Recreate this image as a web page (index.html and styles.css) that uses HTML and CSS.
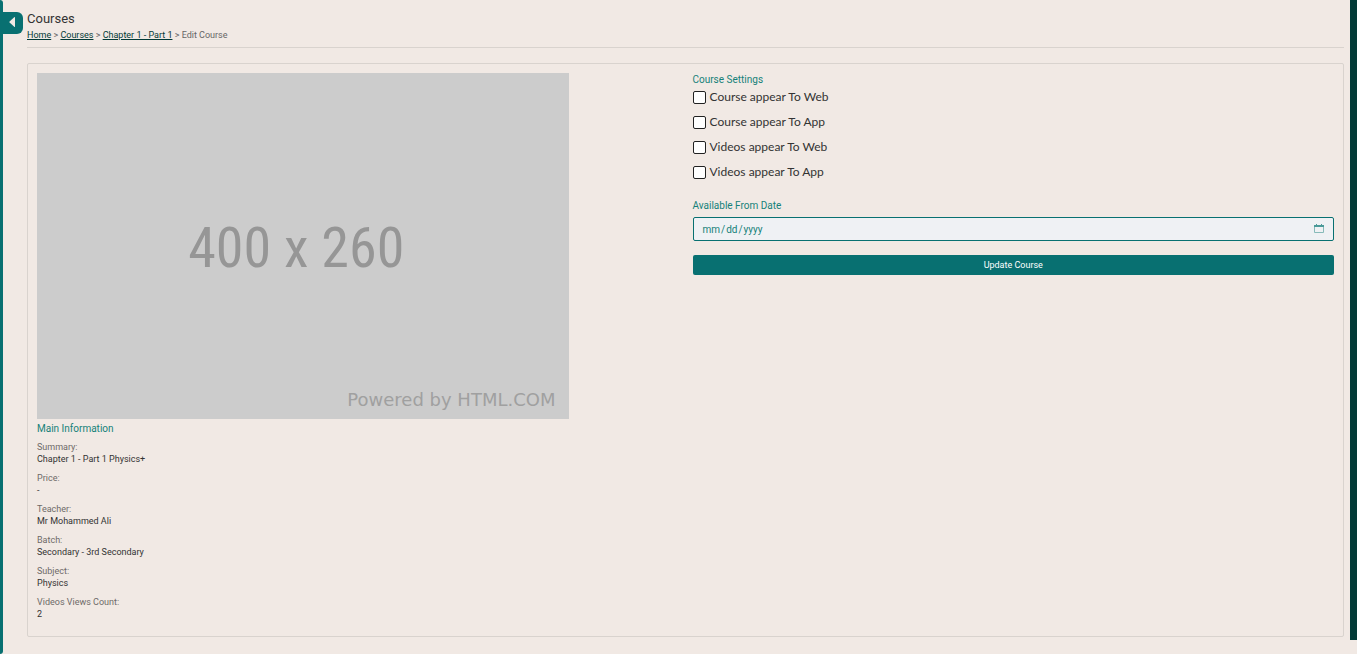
FILE: index.html
```html
<!DOCTYPE html>
<html lang="en">
<head>
<meta charset="utf-8">
<meta name="viewport" content="width=device-width, initial-scale=1">
<title>Edit Course</title>
<link rel="stylesheet" href="styles.css">
</head>
<body>
<div class="shell">
  <aside class="sidebar">
    <button class="sidebar-toggle" type="button" aria-label="Open menu">
      <svg viewBox="0 0 8 12" aria-hidden="true"><path d="M6.2 1.2 1.6 5.4q-.6.6 0 1.2l4.6 4.2q.8.5.8-.4V1.6q0-.9-.8-.4Z"/></svg>
    </button>
  </aside>
  <main class="page">
    <header class="page-header">
      <h1 class="title">Courses</h1>
      <nav class="breadcrumb" aria-label="Breadcrumb">
        <a href="#">Home</a> &gt; <a href="#">Courses</a> &gt; <a href="#">Chapter 1 - Part 1</a> &gt; <span>Edit Course</span>
      </nav>
    </header>
    <section class="panel">
      <div class="info">
        <div class="thumb">
          <span class="thumb-size">400 x 260</span>
          <span class="thumb-credit">Powered by HTML.COM</span>
        </div>
        <h2 class="caption">Main Information</h2>
        <dl class="facts">
          <div><dt>Summary:</dt><dd>Chapter 1 - Part 1 Physics+</dd></div>
          <div><dt>Price:</dt><dd>-</dd></div>
          <div><dt>Teacher:</dt><dd>Mr Mohammed Ali</dd></div>
          <div><dt>Batch:</dt><dd>Secondary - 3rd Secondary</dd></div>
          <div><dt>Subject:</dt><dd>Physics</dd></div>
          <div><dt>Videos Views Count:</dt><dd>2</dd></div>
        </dl>
      </div>
      <form class="settings">
        <fieldset class="options">
          <legend class="caption">Course Settings</legend>
          <label class="option"><input type="checkbox">Course appear To Web</label>
          <label class="option"><input type="checkbox">Course appear To App</label>
          <label class="option"><input type="checkbox">Videos appear To Web</label>
          <label class="option"><input type="checkbox">Videos appear To App</label>
        </fieldset>
        <label class="caption date-label" for="from">Available From Date</label>
        <div class="date-field">
          <input id="from" type="date">
          <svg class="calendar" viewBox="0 0 10 10" aria-hidden="true"><path class="frame" d="M.5 2.5h9v6h-9z"/><path class="bar" d="M0 1h2V0h1v1h4V0h1v1h2v2H0z"/></svg>
        </div>
        <button class="submit" type="button">Update Course</button>
      </form>
    </section>
  </main>
  <div class="rail"></div>
</div>
</body>
</html>
```
FILE: styles.css
```css
* {
  box-sizing: border-box;
}

body {
  margin: 0;
  background: #f1e9e4;
  color: #333;
  font: 9px/12px Roboto, "Open Sans", sans-serif;
}

.shell {
  display: flex;
  min-height: 100vh;
}

.sidebar {
  position: relative;
  flex: none;
  width: 3px;
  background: #087071;
  border-radius: 0 3px 3px 0;
}

.sidebar-toggle {
  position: absolute;
  top: 12px;
  left: 0;
  width: 23px;
  height: 22px;
  padding: 0 0 2px;
  border: 0;
  border-radius: 0 6px 6px 0;
  background: #087071;
  display: flex;
  align-items: center;
  justify-content: center;
}

.sidebar-toggle svg {
  width: 8px;
  height: 12px;
  fill: #f1e9e4;
}

.page {
  flex: 1;
  padding: 10px 6px 16px 24px;
}

.page-header {
  padding-bottom: 6px;
  border-bottom: 1px solid #d9d3ce;
  margin-bottom: 15px;
}

.title {
  margin: 0 0 1px;
  font-size: 13px;
  line-height: 18px;
  font-weight: 400;
}

.breadcrumb {
  color: #666;
}

.breadcrumb a {
  color: #023a37;
  text-underline-offset: 1px;
}

.panel {
  display: grid;
  grid-template-columns: 1fr 1fr;
  gap: 14px;
  padding: 9px;
  border: 1px solid #d9d3ce;
  border-radius: 2px;
}

.thumb {
  position: relative;
  width: 83%;
  aspect-ratio: 400 / 260;
  display: flex;
  align-items: center;
  justify-content: center;
  background: #ccc;
  color: #969696;
}

.thumb-size {
  padding: 4px 14px 0 0;
  font: 56px "Liberation Sans Narrow", "Roboto Condensed", "Liberation Sans", sans-serif;
}

.thumb-credit {
  position: absolute;
  right: 14px;
  bottom: 8px;
  font: 18px/22px "DejaVu Sans", sans-serif;
  color: #a0a0a0;
}

.caption {
  margin: 0;
  padding: 0;
  color: #158179;
  font-size: 10px;
  line-height: 12px;
  font-weight: 400;
}

.info .caption {
  margin-top: 4px;
}

.facts {
  display: grid;
  gap: 7px;
  margin: 6px 0 7px;
}

.facts dt {
  color: #6e6a68;
}

.facts dd {
  margin: 0;
}

.settings {
  padding-top: 1px;
}

.options {
  display: grid;
  gap: 7px;
  margin: 0 0 19px;
  padding: 2px 0 0;
  border: 0;
}

.option {
  display: flex;
  align-items: center;
  gap: 4px;
  font: 12px/18px Lato, "Noto Sans", sans-serif;
  color: #333;
}

.option input {
  appearance: none;
  width: 13px;
  height: 13px;
  margin: 0;
  border: 1px solid #222;
  border-radius: 2px;
  background: #fff;
}

.option input:checked {
  background: #087071;
}

.date-label {
  display: block;
  margin-bottom: 5px;
}

.date-field {
  position: relative;
  margin-bottom: 14px;
}

.date-field input {
  display: block;
  width: 100%;
  height: 24px;
  padding: 0 8px;
  border: 1px solid #087071;
  border-radius: 2px;
  background: #eff1f4;
  color: #158179;
  font: 10px Roboto, "Open Sans", sans-serif;
}

.date-field input::-webkit-calendar-picker-indicator {
  opacity: 0;
}

.calendar {
  position: absolute;
  top: 7px;
  right: 10px;
  width: 10px;
  height: 10px;
  pointer-events: none;
}

.calendar .frame {
  fill: none;
  stroke: #87bab9;
}

.calendar .bar {
  fill: #4b9a99;
}

.submit {
  display: block;
  width: 100%;
  height: 20px;
  padding: 0;
  border: 0;
  border-radius: 2px;
  background: #087071;
  color: #fff;
  font: 9px Roboto, "Open Sans", sans-serif;
}

.rail {
  flex: none;
  width: 7px;
  margin-bottom: 14px;
  background: #023a37;
}
```
